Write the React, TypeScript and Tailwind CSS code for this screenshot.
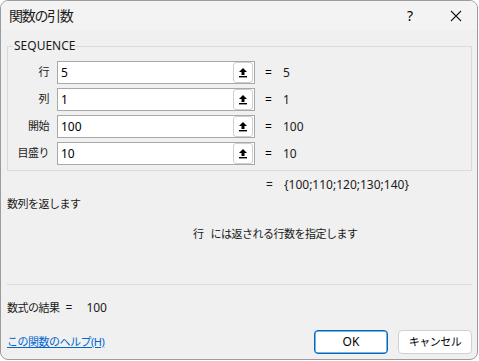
import React from "react";

const FONT = { fontFamily: '"Noto Sans", "Noto Sans CJK JP", sans-serif' };
const JP = "text-[11px] tracking-[-0.5px]";

function UpBtn() {
  return (
    <div className="w-[20px] h-[21px] mr-[1px] bg-white border border-[#cfcfcf] rounded-[3px] flex items-center justify-center">
      <svg width="10" height="11" viewBox="0 0 10 11">
        <path d="M5 1 L1 5 L3.5 5 L3.5 8 L6.5 8 L6.5 5 L9 5 Z" fill="#000" />
        <rect x="1" y="9" width="8" height="1.4" fill="#000" />
      </svg>
    </div>
  );
}

function Row({ label, value }: { label: string; value: string }) {
  return (
    <div className="flex items-center h-[23px]">
      <div className={`w-[41px] text-right text-[#1a1a1a] ${JP}`}>{label}</div>
      <div className="ml-[8px] w-[198px] h-[23px] bg-white border border-[#a8a8a8] flex items-center justify-between">
        <span className="pl-[3px] text-[12px] text-black">{value}</span>
        <UpBtn />
      </div>
      <span className="ml-[10px] w-[8px] text-[12px]">=</span>
      <span className="ml-[10px] text-[12px] text-[#1a1a1a]">{value}</span>
    </div>
  );
}

export default function App() {
  return (
    <div className="w-[479px] h-[361px] bg-white" style={FONT}>
      <div className="w-[478px] h-[360px] border border-[#9c9c9c] rounded-[8px] overflow-hidden flex flex-col bg-[#f0f0f0]">
        <div className="h-[29px] bg-[#f3f3f3] flex items-center pl-[8px] shrink-0">
          <span className="text-[14px] tracking-[-1.3px] text-[#1a1a1a]">関数の引数</span>
          <span className="ml-auto text-[14px] mr-[37px]">?</span>
          <svg width="12" height="12" viewBox="0 0 12 12" className="mr-[15px]">
            <path d="M1 1 L11 11 M11 1 L1 11" stroke="#1a1a1a" strokeWidth="1.1" />
          </svg>
        </div>
        <div className="flex-1 flex flex-col">
          <fieldset className="mt-[8px] ml-[6px] mr-[5px] border border-[#dadada] pb-[5px]">
            <legend className="ml-[5px] px-[1px] text-[12px] leading-[16px] text-[#1a1a1a]">SEQUENCE</legend>
            <div className="flex flex-col gap-[4px] pt-[7px]">
              <Row label="行" value="5" />
              <Row label="列" value="1" />
              <Row label="開始" value="100" />
              <Row label="目盛り" value="10" />
            </div>
          </fieldset>
          <div className="flex items-center h-[16px] mt-[6px] pl-[265px] text-[12px] text-[#1a1a1a]">
            <span className="w-[8px]">=</span>
            <span className="ml-[10px]">{"{100;110;120;130;140}"}</span>
          </div>
          <div className={`h-[16px] mt-[3px] pl-[6px] text-[#1a1a1a] flex items-center ${JP}`}>数列を返します</div>
          <div className={`h-[16px] mt-[14px] pl-[192px] text-[#1a1a1a] flex items-center ${JP}`}>
            <span>行</span>
            <span className="ml-[7px]">には返される行数を指定します</span>
          </div>
          <div className="mt-[42px] ml-[6px] mr-[5px] h-px bg-[#dadada]" />
          <div className="mt-[15px] h-[16px] pl-[6px] text-[#1a1a1a] flex items-center">
            <span className={JP}>数式の結果</span>
            <span className="ml-[6px] text-[12px]">=</span>
            <span className="ml-[14px] text-[12px]">100</span>
          </div>
          <div className="mt-[14px] flex items-center pl-[6px] pr-[5px]">
            <a className={`text-[#0066cc] underline ${JP}`}>この関数のヘルプ(H)</a>
            <button className="ml-auto w-[74px] h-[24px] bg-white border border-[#0067c0] rounded-[4px] text-[12px] text-black" style={{ boxShadow: "inset 0 0 0 0.5px #0067c0" }}>OK</button>
            <button className={`ml-[10px] w-[74px] h-[24px] bg-white border border-[#d0d0d0] rounded-[4px] text-black ${JP}`}>キャンセル</button>
          </div>
        </div>
      </div>
    </div>
  );
}
